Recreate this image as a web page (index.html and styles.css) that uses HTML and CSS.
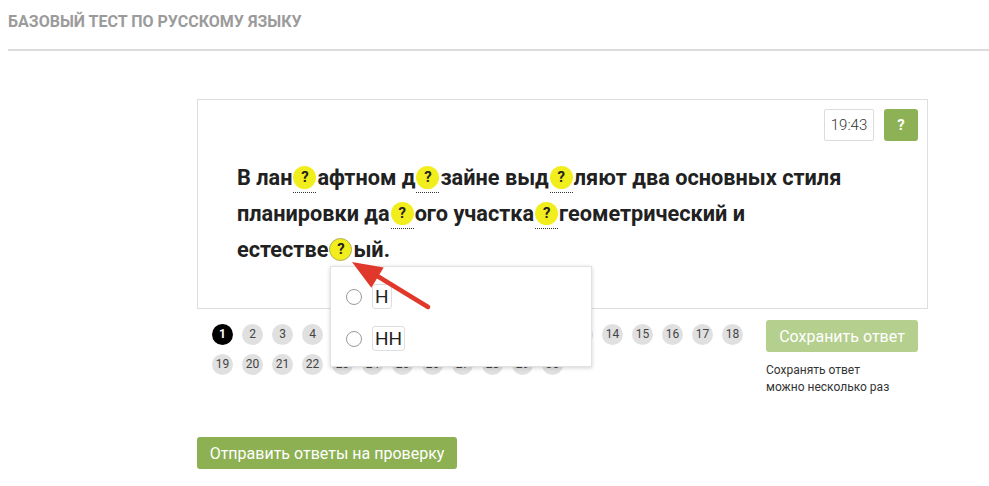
FILE: index.html
```html
<!DOCTYPE html>
<html lang="ru">
<head>
<meta charset="utf-8">
<title>Базовый тест по русскому языку</title>
<link rel="stylesheet" href="styles.css">
</head>
<body>
<div class="page">
  <h1 class="page-title">Базовый тест по русскому языку</h1>
  <div class="rule"></div>
  <main class="test">
    <section class="card">
      <div class="card-top">
        <div class="timer">19:43</div>
        <button class="help">?</button>
      </div>
      <p class="question">В <span class="word">лан<span class="gap"><span class="dot">?</span></span>афтном</span> <span class="word">д<span class="gap"><span class="dot">?</span></span>зайне</span> <span class="word">выд<span class="gap"><span class="dot">?</span></span>ляют</span> два основных стиля планировки <span class="word">да<span class="gap"><span class="dot">?</span></span>ого</span> <span class="word">участка<span class="gap"><span class="dot">?</span></span>геометрический</span> и <span class="word">естестве<span class="gap active"><span class="dot">?</span></span>ый.</span></p>
    </section>
    <div class="controls">
      <ol class="nav">
        <li class="current">1</li><li>2</li><li>3</li><li>4</li><li>5</li><li>6</li><li>7</li><li>8</li><li>9</li><li>10</li><li>11</li><li>12</li><li>13</li><li>14</li><li>15</li><li>16</li><li>17</li><li>18</li>
        <li>19</li><li>20</li><li>21</li><li>22</li><li>23</li><li>24</li><li>25</li><li>26</li><li>27</li><li>28</li><li>29</li><li>30</li>
      </ol>
      <div class="save">
        <button class="save-btn">Сохранить ответ</button>
        <p class="save-note">Сохранять ответ<br>можно несколько раз</p>
      </div>
    </div>
    <button class="submit">Отправить ответы на проверку</button>

    <div class="popup">
      <label class="option"><span class="radio"></span><span class="choice">Н</span></label>
      <label class="option"><span class="radio"></span><span class="choice">НН</span></label>
    </div>
    <svg class="arrow" width="90" height="60" viewBox="0 0 90 60">
      <line x1="84" y1="48" x2="30" y2="15" stroke="#e0392b" stroke-width="4.5" stroke-linecap="round"/>
      <polygon points="8,3 39.7,8.4 27.3,28.8" fill="#e0392b"/>
    </svg>
  </main>
</div>
</body>
</html>
```

FILE: styles.css
```css
* { box-sizing: border-box; }

html, body {
  margin: 0;
  padding: 0;
  background: #fff;
}

body {
  font-family: Roboto, "Liberation Sans", Arial, sans-serif;
  color: #212121;
}

.page {
  padding-left: 8px;
}

.page-title {
  margin: 0;
  padding-top: 12px;
  font-size: 16px;
  line-height: 20px;
  font-weight: 700;
  text-transform: uppercase;
  color: #9b9b9b;
}

.rule {
  margin-top: 17px;
  height: 2px;
  background: #dcdcdc;
}

.test {
  position: relative;
  margin-top: 48px;
  margin-left: 189px;
  width: 731px;
}

.card {
  border: 1px solid #dedede;
  padding: 9px 9px 40px 39px;
}

.card-top {
  display: flex;
  justify-content: flex-end;
  gap: 10px;
}

.timer {
  width: 50px;
  height: 32px;
  border: 1px solid #dcdcdc;
  border-radius: 2px;
  font-size: 15px;
  font-weight: 300;
  line-height: 30px;
  text-align: center;
  color: #333;
}

.help {
  width: 34px;
  height: 32px;
  border: 0;
  border-radius: 3px;
  background: #8db255;
  color: #fff;
  font-family: inherit;
  font-size: 15px;
  font-weight: 700;
  padding: 0;
}

.question {
  margin: 19px 0 0;
  max-width: 640px;
  font-size: 21.7px;
  font-weight: 700;
  line-height: 36px;
  color: #212121;
}

.word {
  white-space: nowrap;
}

.gap {
  display: inline-block;
  vertical-align: middle;
  padding-bottom: 3px;
  border-bottom: 1px dotted #333;
  margin: 0 1px;
}

.dot {
  display: block;
  width: 23px;
  height: 23px;
  border-radius: 50%;
  background: #f2ed1d;
  font-size: 15px;
  font-weight: 700;
  line-height: 23px;
  text-align: center;
  color: #222;
}

.gap.active {
  border-bottom-color: transparent;
}

.gap.active .dot {
  border: 1px solid #b2ad5a;
  line-height: 21px;
}

.controls {
  display: flex;
  justify-content: space-between;
  margin-top: 11px;
  padding: 0 10px 0 15px;
}

.nav {
  list-style: none;
  margin: 4px 0 0;
  padding: 0;
  display: grid;
  grid-template-columns: repeat(18, 21px);
  column-gap: 9px;
  row-gap: 9px;
  align-content: start;
}

.nav li {
  width: 21px;
  height: 21px;
  border-radius: 50%;
  background: #e0e0e0;
  color: #444;
  font-size: 12px;
  line-height: 21px;
  text-align: center;
}

.nav li.current {
  background: #000;
  color: #fff;
  font-weight: 700;
}

.save {
  width: 152px;
}

.save-btn {
  display: block;
  width: 152px;
  height: 32px;
  border: 0;
  border-radius: 3px;
  background: #b5cf8e;
  color: #fff;
  font-family: inherit;
  font-size: 16px;
  padding: 0;
}

.save-note {
  margin: 10px 0 0;
  font-size: 12px;
  line-height: 17px;
  color: #333;
}

.submit {
  display: block;
  margin-top: 41px;
  width: 260px;
  height: 32px;
  border: 0;
  border-radius: 3px;
  background: #8cb052;
  color: #fff;
  font-family: inherit;
  font-size: 16px;
  padding: 0;
}

.popup {
  position: absolute;
  left: 133px;
  top: 167px;
  width: 262px;
  height: 101px;
  background: #fff;
  border: 1px solid #e2e2e2;
  box-shadow: 0 1px 4px rgba(0, 0, 0, 0.18);
  padding: 17px 15px;
  display: flex;
  flex-direction: column;
  gap: 17px;
}

.option {
  display: flex;
  align-items: center;
  height: 25px;
  gap: 10px;
}

.radio {
  width: 16px;
  height: 16px;
  border: 1px solid #9a9a9a;
  border-radius: 50%;
  background: #fff;
}

.choice {
  height: 25px;
  padding: 0 2px;
  border: 1px solid #dedede;
  border-radius: 3px;
  font-size: 19px;
  line-height: 23px;
  color: #222;
}

.arrow {
  position: absolute;
  left: 147px;
  top: 160px;
}
```
